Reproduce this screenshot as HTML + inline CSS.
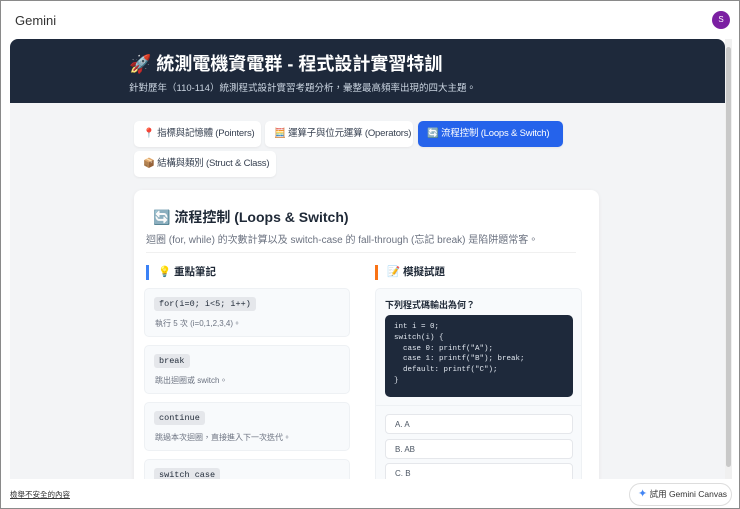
<!DOCTYPE html>
<html><head><meta charset="utf-8"><style>
*{box-sizing:border-box;margin:0;padding:0}
body{width:740px;height:509px;overflow:hidden;background:#fff;font-family:"Liberation Sans","Noto Sans CJK TC",sans-serif;position:relative;border:1px solid #8a8a8a}
.top{position:absolute;left:14px;top:12px;font-size:13px;color:#333}
.av{position:absolute;left:711px;top:10px;width:18px;height:18px;border-radius:50%;background:#7b1fa2;color:#fff;font-size:8px;text-align:center;line-height:18px}
.panel{position:absolute;left:9px;top:38px;width:715px;height:440px;background:#f3f4f6;border-radius:8px 8px 0 0;overflow:hidden}
.sb{position:absolute;left:724px;top:38px;width:7px;height:440px;background:#f0f0f0}
.sb div{position:absolute;left:1px;top:8px;width:5px;height:420px;background:#c8c8c8;border-radius:3px}
.hd{height:64px;background:#1e293b;color:#fff;padding-left:119px}
.hd h1{font-size:18px;font-weight:bold;padding-top:13px;line-height:24px}
.hd p{font-size:9.5px;color:#cbd5e1;margin-top:4px}
.tab{position:absolute;height:26px;background:#fff;border-radius:5px;font-size:9.5px;color:#374151;line-height:26px;padding-left:9px;box-shadow:0 1px 2px rgba(0,0,0,.06);white-space:nowrap;overflow:hidden;letter-spacing:-.2px}
.tab.on{background:#2563eb;color:#fff}
.card{position:absolute;left:124px;top:151px;width:465px;height:300px;background:#fff;border-radius:8px;box-shadow:0 1px 4px rgba(0,0,0,.06)}
.mono{font-family:"Liberation Mono",monospace}
.note{position:absolute;left:10px;width:206px;height:49px;background:#f8fafc;border:1px solid #eef1f4;border-radius:5px}
.note code{position:absolute;left:9px;top:8px;background:#e5e7eb;border-radius:3px;padding:2px 5px;font-size:8.5px;color:#1f2937}
.note span{position:absolute;left:10px;top:29px;font-size:8px;color:#6b7280}
.opt{position:absolute;left:251px;width:188px;height:20px;border:1px solid #e5e7eb;border-radius:4px;font-size:8px;color:#4b5563;padding-left:9px;line-height:19px;background:#fff}
</style></head><body>
<div class="top">Gemini</div><div class="av">S</div>
<div class="panel">
<div class="hd"><h1>🚀 統測電機資電群 - 程式設計實習特訓</h1><p>針對歷年（110-114）統測程式設計實習考題分析，彙整最高頻率出現的四大主題。</p></div>
<div class="tab" style="left:124px;top:82px;width:127px">📍 指標與記憶體 (Pointers)</div>
<div class="tab" style="left:255px;top:82px;width:148px">🧮 運算子與位元運算 (Operators)</div>
<div class="tab on" style="left:408px;top:82px;width:145px">🔄 流程控制 (Loops &amp; Switch)</div>
<div class="tab" style="left:124px;top:112px;width:142px">📦 結構與類別 (Struct &amp; Class)</div>
<div class="card">
<div style="position:absolute;left:19px;top:17px;font-size:14px;font-weight:bold;color:#1f2937">🔄 流程控制 (Loops &amp; Switch)</div>
<div style="position:absolute;left:12px;top:41px;font-size:10px;color:#6b7280;white-space:nowrap">迴圈 (for, while) 的次數計算以及 switch-case 的 fall-through (忘記 break) 是陷阱題常客。</div>
<div style="position:absolute;left:12px;top:62px;width:430px;height:1px;background:#f0f0f0"></div>
<div style="position:absolute;left:12px;top:75px;height:15px;border-left:3px solid #3b82f6;padding-left:9px;font-size:10.5px;font-weight:bold;color:#1f2937;line-height:15px">💡 重點筆記</div>
<div style="position:absolute;left:241px;top:75px;height:15px;border-left:3px solid #f97316;padding-left:9px;font-size:10.5px;font-weight:bold;color:#1f2937;line-height:15px">📝 模擬試題</div>
<div class="note" style="top:98px"><code class="mono">for(i=0; i&lt;5; i++)</code><span>執行 5 次 (i=0,1,2,3,4)。</span></div>
<div class="note" style="top:155px"><code class="mono">break</code><span>跳出迴圈或 switch。</span></div>
<div class="note" style="top:212px"><code class="mono">continue</code><span>跳過本次迴圈，直接進入下一次迭代。</span></div>
<div class="note" style="top:269px"><code class="mono">switch case</code></div>
<div style="position:absolute;left:241px;top:98px;width:207px;height:210px;background:#f8fafc;border:1px solid #eef1f4;border-radius:5px"></div>
<div style="position:absolute;left:251px;top:108px;font-size:9px;font-weight:bold;color:#1f2937">下列程式碼輸出為何？</div>
<div class="mono" style="position:absolute;left:251px;top:125px;width:188px;height:82px;background:#1e293b;border-radius:5px;color:#e2e8f0;font-size:7.5px;line-height:10.8px;padding:7px 9px;white-space:pre">int i = 0;
switch(i) {
  case 0: printf("A");
  case 1: printf("B"); break;
  default: printf("C");
}</div>
<div style="position:absolute;left:242px;top:215px;width:205px;height:1px;background:#eef1f4"></div>
<div class="opt" style="top:224px">A. A</div>
<div class="opt" style="top:249px">B. AB</div>
<div class="opt" style="top:273px">C. B</div>
</div>
</div>
<div class="sb"><div></div></div>
<div style="position:absolute;left:9px;top:488px;font-size:7.5px;color:#333;text-decoration:underline">檢舉不安全的內容</div>
<div style="position:absolute;left:628px;top:482px;width:103px;height:23px;border:1px solid #ddd;border-radius:12px;font-size:8.5px;color:#333;line-height:21px;padding-left:8px;white-space:nowrap"><span style="color:#4285f4;font-size:11px">✦</span> 試用 Gemini Canvas</div>
</body></html>
